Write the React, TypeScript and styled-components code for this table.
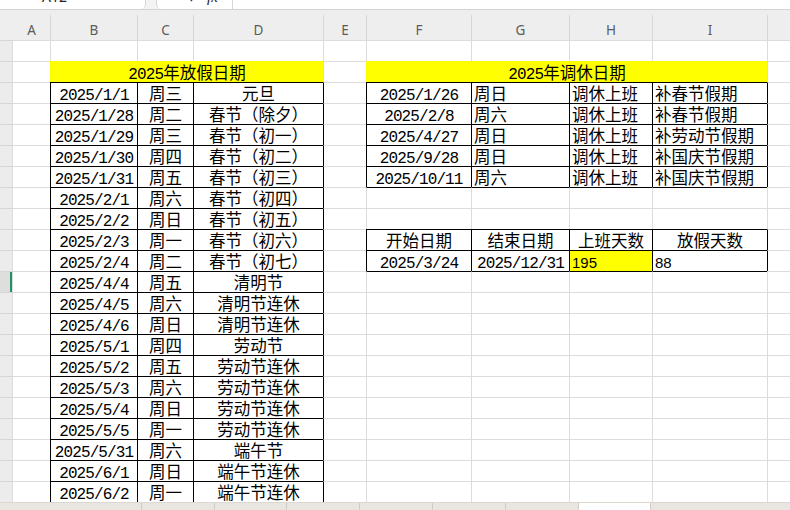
import React from 'react';
import styled, { createGlobalStyle } from 'styled-components';

const GlobalStyle = createGlobalStyle`
  html, body { margin: 0; padding: 0; background: #ffffff; }
  body { width: 790px; height: 510px; overflow: hidden; font-family: "Noto Sans", sans-serif; }
`;

const COLS = '12px 38px 87px 56px 130px 43px 105px 98px 83px 115px 1fr';
const GRID = '#dcdcdc';
const BLACK = '#000000';
const YELLOW = '#ffff00';

const Page = styled.div`
  display: flex;
  flex-direction: column;
  width: 790px;
  height: 510px;
  overflow: hidden;
`;

const TopBar = styled.div`
  flex: none;
  height: 10px;
  display: flex;
  gap: 10px;
  background: #f3f3f3;
  border-bottom: 1px solid #d3d3d3;
  box-sizing: border-box;
  overflow: hidden;
`;

const NameBox = styled.div`
  flex: none;
  width: 146px;
  display: flex;
  align-items: flex-end;
  padding: 0 0 5px 42px;
  box-sizing: border-box;
  background: #ffffff;
  border-right: 1px solid #d6d6d6;
  border-bottom-right-radius: 5px;
`;

const BarText = styled.span`
  flex: none;
  height: 14px;
  font-family: "Noto Sans", sans-serif;
  font-size: 14px;
  line-height: 14px;
  color: #222222;
`;

const FormulaBox = styled.div`
  flex: 1;
  display: flex;
  align-items: flex-end;
  gap: 14px;
  padding: 0 0 5px 24px;
  box-sizing: border-box;
  background: #ffffff;
  border-left: 1px solid #d6d6d6;
  border-bottom-left-radius: 5px;
`;

const FxText = styled(BarText)`
  font-style: italic;
  font-family: "Liberation Serif", serif;
  font-size: 15px;
`;

const BarDivider = styled.div`
  align-self: stretch;
  width: 1px;
  margin: 0 0 -5px 0;
  background: #d6d6d6;
`;

const ColHeaderRow = styled.div`
  flex: none;
  height: 30px;
  display: grid;
  grid-template-columns: ${COLS};
  background: #eeeeee;
`;

const ColHead = styled.div<{ $plain?: boolean }>`
  margin-top: 5px;
  padding-top: 4px;
  display: flex;
  align-items: center;
  justify-content: center;
  border-left: 1px solid ${(p) => (p.$plain ? 'transparent' : '#d6d6d6')};
  font-family: "Noto Sans", sans-serif;
  font-size: 13.5px;
  color: #5c5c5c;
`;

const SheetBody = styled.div`
  flex: none;
  display: flex;
  flex-direction: column;
`;

const SheetRow = styled.div`
  height: 21px;
  display: grid;
  grid-template-columns: ${COLS};
`;

const RowHead = styled.div<{ $active?: boolean }>`
  background: ${(p) => (p.$active ? '#dedede' : '#ececec')};
  border-top: 1px solid #d6d6d6;
  box-shadow: ${(p) => (p.$active ? 'inset -2px 0 0 #1f9463' : 'none')};
`;

const Cell = styled.div<{
  $align: 'left' | 'center';
  $fill?: string;
  $lc: string;
  $tc: string;
  $span: number;
}>`
  grid-column: span ${(p) => p.$span};
  display: flex;
  align-items: center;
  justify-content: ${(p) => (p.$align === 'left' ? 'flex-start' : 'center')};
  padding: 0 0 0 ${(p) => (p.$align === 'left' ? '2px' : '0')};
  box-sizing: border-box;
  min-width: 0;
  white-space: nowrap;
  background: ${(p) => p.$fill || 'transparent'};
  border-left: 1px solid ${(p) => p.$lc};
  border-top: 1px solid ${(p) => p.$tc};
  color: #000000;
`;

const CellText = styled.span`
  display: block;
  height: 18px;
  line-height: 18px;
  white-space: nowrap;
  font-family: "Noto Sans CJK SC", sans-serif;
  font-size: 16.5px;
`;

const Latin = styled.span`
  font-family: "Liberation Mono", "DejaVu Sans Mono", monospace;
  font-size: 16px;
  letter-spacing: -0.9px;
`;

const Han = styled.span`
  font-family: "Noto Sans CJK SC", sans-serif;
  font-size: 16.5px;
`;

const PlainNum = styled.span`
  font-family: "Liberation Sans", Arial, sans-serif;
  font-size: 15px;
`;

const BottomBar = styled.div`
  flex: 1;
  display: flex;
  background: #ebe7e2;
  border-top: 1px solid #dcd7d0;
  box-sizing: border-box;
`;

const SheetTab = styled.div<{ $w?: number; $active?: boolean; $first?: boolean }>`
  flex: ${(p) => (p.$w ? `0 0 ${p.$w}px` : '1')};
  background: ${(p) => (p.$active ? '#ffffff' : '#e9e5e0')};
  border-left: 1px solid ${(p) => (p.$first ? 'transparent' : '#d2ccc4')};
`;

type CellDef = { t: string; align?: 'left' | 'center'; fill?: string; span?: number; plain?: boolean; title?: boolean };

const holidays: [string, string, string][] = [
  ['2025/1/1', '周三', '元旦'],
  ['2025/1/28', '周二', '春节（除夕）'],
  ['2025/1/29', '周三', '春节（初一）'],
  ['2025/1/30', '周四', '春节（初二）'],
  ['2025/1/31', '周五', '春节（初三）'],
  ['2025/2/1', '周六', '春节（初四）'],
  ['2025/2/2', '周日', '春节（初五）'],
  ['2025/2/3', '周一', '春节（初六）'],
  ['2025/2/4', '周二', '春节（初七）'],
  ['2025/4/4', '周五', '清明节'],
  ['2025/4/5', '周六', '清明节连休'],
  ['2025/4/6', '周日', '清明节连休'],
  ['2025/5/1', '周四', '劳动节'],
  ['2025/5/2', '周五', '劳动节连休'],
  ['2025/5/3', '周六', '劳动节连休'],
  ['2025/5/4', '周日', '劳动节连休'],
  ['2025/5/5', '周一', '劳动节连休'],
  ['2025/5/31', '周六', '端午节'],
  ['2025/6/1', '周日', '端午节连休'],
  ['2025/6/2', '周一', '端午节连休'],
];

const workdays: [string, string, string, string][] = [
  ['2025/1/26', '周日', '调休上班', '补春节假期'],
  ['2025/2/8', '周六', '调休上班', '补春节假期'],
  ['2025/4/27', '周日', '调休上班', '补劳动节假期'],
  ['2025/9/28', '周日', '调休上班', '补国庆节假期'],
  ['2025/10/11', '周六', '调休上班', '补国庆节假期'],
];

const isBox = (r: number, c: number) => {
  if (c >= 2 && c <= 4 && r >= 3 && r <= 22) return true;
  if (c >= 6 && c <= 9 && ((r >= 3 && r <= 7) || (r >= 10 && r <= 11))) return true;
  return false;
};

const empty = (): CellDef => ({ t: '' });

const buildRow = (r: number): CellDef[] => {
  const cells: CellDef[] = [empty()]; // A
  if (r === 2) {
    cells.push({ t: '2025年放假日期', span: 3, fill: YELLOW, title: true });
    cells.push(empty());
    cells.push({ t: '2025年调休日期', span: 4, fill: YELLOW, title: true });
    cells.push(empty());
    return cells;
  }
  const h = r >= 3 ? holidays[r - 3] : undefined;
  if (h) {
    cells.push({ t: h[0] }, { t: h[1] }, { t: h[2] });
  } else {
    cells.push(empty(), empty(), empty());
  }
  cells.push(empty()); // E
  const w = r >= 3 && r <= 7 ? workdays[r - 3] : undefined;
  if (w) {
    cells.push({ t: w[0] }, { t: w[1], align: 'left' }, { t: w[2], align: 'left' }, { t: w[3], align: 'left' });
  } else if (r === 10) {
    cells.push({ t: '开始日期' }, { t: '结束日期' }, { t: '上班天数' }, { t: '放假天数' });
  } else if (r === 11) {
    cells.push(
      { t: '2025/3/24' },
      { t: '2025/12/31' },
      { t: '195', align: 'left', fill: YELLOW, plain: true },
      { t: '88', align: 'left', plain: true },
    );
  } else {
    cells.push(empty(), empty(), empty(), empty());
  }
  cells.push(empty()); // J
  return cells;
};

const Mixed: React.FC<{ text: string }> = ({ text }) => {
  const parts = text.match(/[\x00-\x7f]+|[^\x00-\x7f]+/g) || [];
  return (
    <CellText>
      {parts.map((s, i) =>
        /[\x00-\x7f]/.test(s[0]) ? <Latin key={i}>{s}</Latin> : <Han key={i}>{s}</Han>,
      )}
    </CellText>
  );
};

const Magnifier = () => (
  <svg width="12" height="14" viewBox="0 0 12 14" style={{ flex: 'none' }}>
    <circle cx="5" cy="5" r="4" fill="none" stroke="#444" strokeWidth="1.3" />
    <line x1="8" y1="8" x2="11" y2="11" stroke="#444" strokeWidth="1.4" />
  </svg>
);

const letters = ['A', 'B', 'C', 'D', 'E', 'F', 'G', 'H', 'I', ''];

export default function App() {
  const rows = Array.from({ length: 22 }, (_, i) => i + 1);
  return (
    <Page>
      <GlobalStyle />
      <TopBar>
        <NameBox>
          <BarText>A12</BarText>
        </NameBox>
        <FormulaBox>
          <Magnifier />
          <FxText>fx</FxText>
          <BarDivider />
        </FormulaBox>
      </TopBar>
      <ColHeaderRow>
        <ColHead $plain />
        {letters.map((l, i) => (
          <ColHead key={i} $plain={i === 0}>
            {l}
          </ColHead>
        ))}
      </ColHeaderRow>
      <SheetBody>
        {rows.map((r) => {
          const defs = buildRow(r);
          let col = 1;
          return (
            <SheetRow key={r}>
              <RowHead $active={r === 12} />
              {defs.map((d, i) => {
                const c = col;
                const span = d.span || 1;
                col += span;
                const lc = d.title ? 'transparent' : isBox(r, c) || isBox(r, c - 1) ? BLACK : GRID;
                const tc = d.title ? 'transparent' : isBox(r, c) || isBox(r - 1, c) ? BLACK : GRID;
                return (
                  <Cell key={i} $align={d.align || 'center'} $fill={d.fill} $lc={lc} $tc={tc} $span={span}>
                    {d.t === '' ? null : d.plain ? (
                      <CellText>
                        <PlainNum>{d.t}</PlainNum>
                      </CellText>
                    ) : (
                      <Mixed text={d.t} />
                    )}
                  </Cell>
                );
              })}
            </SheetRow>
          );
        })}
      </SheetBody>
      <BottomBar>
        <SheetTab $w={140} $first />
        <SheetTab $w={72} />
        <SheetTab $w={71} />
        <SheetTab $w={72} />
        <SheetTab $w={72} />
        <SheetTab $w={72} />
        <SheetTab $w={72} />
        <SheetTab $w={71} $active />
        <SheetTab />
      </BottomBar>
    </Page>
  );
}
